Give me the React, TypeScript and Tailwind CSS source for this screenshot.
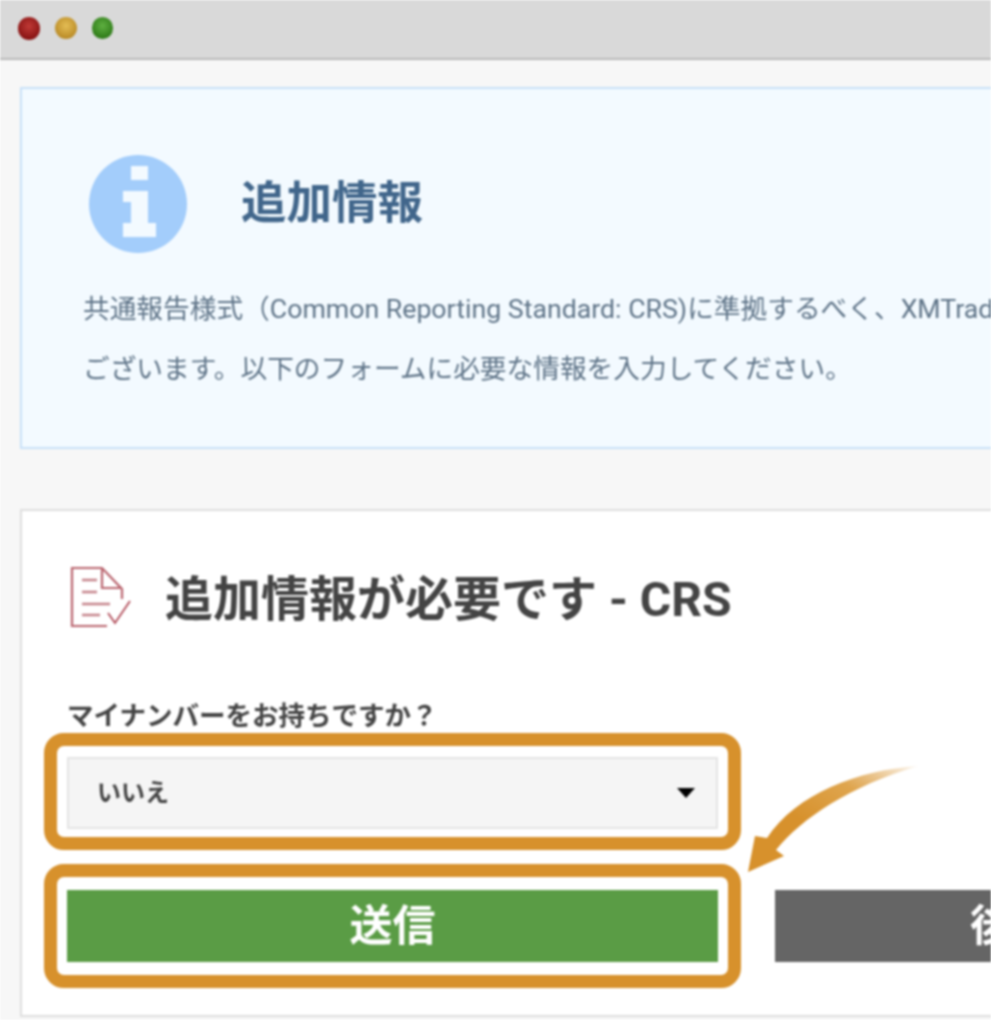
export default function App() {
  const font = { fontFamily: 'Roboto, "Noto Sans CJK JP", sans-serif' };
  return (
    <div style={font} className="relative h-[1020px] w-[991px] overflow-hidden bg-[#f7f7f7] blur-[0.8px]">
      <div className="flex h-[60px] items-center gap-[15px] border-b-2 border-[#b9b9b9] bg-[#d9d9d9] pb-[2px] pl-[18px]">
        <span className="h-[23px] w-[22px] rounded-full bg-[radial-gradient(circle_at_50%_40%,#c03a36,#861212_75%)]" />
        <span className="h-[22px] w-[22px] rounded-full bg-[radial-gradient(circle_at_50%_40%,#e4bd55,#b98a25_75%)]" />
        <span className="h-[22px] w-[21px] rounded-full bg-[radial-gradient(circle_at_50%_40%,#5fb041,#2d7a17_75%)]" />
      </div>
      <div className="pl-[20px] pt-[27px]">
        <section className="h-[362px] w-[1500px] border-2 border-[#c8e1f8] bg-[#f3faff] pl-[61px] pt-[66px]">
          <div className="flex items-center gap-[54px] pl-[6px]">
            <svg width="98" height="98" viewBox="0 0 98 98">
              <circle cx="49" cy="49" r="49" fill="#a3cdfb" />
              <path fill="#f3faff" d="M42 11h17v14H42zM34 36h25v32h8v14H34V68h8V47h-8z" />
            </svg>
            <h1 className="text-[45.5px] font-bold leading-none text-[#41668b]">追加情報</h1>
          </div>
          <p className="mt-[26px] whitespace-nowrap text-[26.7px] leading-[60px] text-[#5f7488]">
            共通報告様式（Common Reporting Standard: CRS)に準拠するべく、XMTrading
            <br />
            ございます。以下のフォームに必要な情報を入力してください。
          </p>
        </section>
        <section className="mt-[60px] h-[508px] w-[1500px] border-2 border-[#dedede] bg-white pl-[45px] pt-[55px]">
          <div className="flex items-start gap-[33px] pl-[3px]">
            <svg width="62" height="62" viewBox="0 0 62 62" fill="none" stroke="#b9646e" strokeWidth="2.2">
              <path d="M37 60H2V2h30l20 21v10M32 2v20h20" />
              <path d="M12 14h15M12 26h15M12 38h28M12 49h18" strokeWidth="2.6" stroke="#c5828a" />
              <path d="M38 47l7 10 15-22" stroke="#b04a57" strokeWidth="1.8" />
            </svg>
            <h2 className="mt-[10px] text-[48px] font-bold leading-none text-[#444]">追加情報が必要です - CRS</h2>
          </div>
          <label className="mt-[68px] block text-[26.5px] font-bold leading-[40px] text-[#444]">マイナンバーをお持ちですか？</label>
          <div className="relative mt-[21px] flex h-[72px] w-[651px] items-center justify-between border-2 border-[#e4e4e4] bg-[#f5f5f5] pl-[28px] pr-[21px]">
            <span className="text-[24px] font-bold text-[#444]">いいえ</span>
            <span className="border-x-[9px] border-t-[10px] border-x-transparent border-t-black" />
            <div className="absolute -inset-x-[25px] -bottom-[23px] -top-[26px] rounded-[20px] border-[13px] border-[#d7912c]" />
          </div>
          <div className="mt-[61px] flex gap-[57px]">
            <div className="relative flex h-[72px] w-[651px] items-center justify-center bg-[#5a9c45] text-[43px] font-bold text-white">
              送信
              <div className="absolute -inset-x-[23px] -inset-y-[26px] rounded-[20px] border-[13px] border-[#d7912c]" />
            </div>
            <div className="flex h-[72px] w-[651px] items-center whitespace-nowrap bg-[#656565] pl-[195px] text-[43px] font-bold text-white">
              後で入力
            </div>
          </div>
        </section>
      </div>
      <svg className="absolute left-[740px] top-[760px]" width="190" height="120" viewBox="0 0 190 120">
        <defs>
          <linearGradient id="a" x1="1" y1="0" x2="0" y2="1">
            <stop offset="0" stopColor="#d7912c" stopOpacity="0.05" />
            <stop offset="0.3" stopColor="#dfa54e" />
            <stop offset="0.6" stopColor="#d7912c" />
          </linearGradient>
        </defs>
        <path fill="url(#a)" d="M178 6C118 10 56 34 27 78l-12-2L8 112l36-16-8-6C62 58 110 26 178 6z" />
      </svg>
    </div>
  );
}
